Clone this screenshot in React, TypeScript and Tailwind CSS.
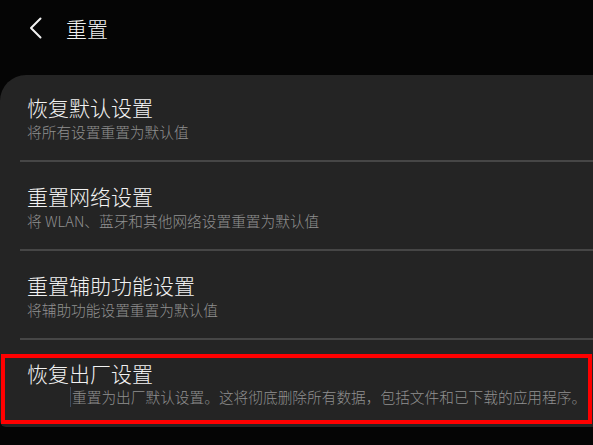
import React from 'react';

const font = { fontFamily: '"Noto Sans CJK SC", "Noto Sans", sans-serif' };

const rows = [
  { title: '恢复默认设置', desc: '将所有设置重置为默认值' },
  { title: '重置网络设置', desc: '将 WLAN、蓝牙和其他网络设置重置为默认值' },
  { title: '重置辅助功能设置', desc: '将辅助功能设置重置为默认值' },
];

function Row({ title, desc, first }: { title: string; desc: string; first?: boolean }) {
  return (
    <div>
      <div className={first ? 'pl-[27px] pt-[19px] pb-[18px]' : 'pl-[27px] pt-[21px] pb-[18px]'}>
        <div className="text-[21px] leading-[26px] font-light text-[#f2f2f2]">{title}</div>
        <div className="mt-[2px] text-[14.7px] leading-[20px] font-light text-[#909090] whitespace-nowrap">{desc}</div>
      </div>
      <div className="ml-[20px] h-[2px] bg-[#464646]" />
    </div>
  );
}

export default function App() {
  return (
    <div className="w-[593px] h-[445px] overflow-hidden bg-[#050505]" style={font}>
      <div className="flex h-[55px] items-center pl-[29px]">
        <svg width="14" height="22" viewBox="0 0 14 22" className="shrink-0">
          <polyline points="11.5,1.5 2,11 11.5,20.5" fill="none" stroke="#f2f2f2" strokeWidth="2" strokeLinecap="round" strokeLinejoin="round" />
        </svg>
        <span className="ml-[23px] text-[21px] leading-[26px] font-light text-[#f2f2f2]">重置</span>
      </div>
      <div className="mt-[20px] rounded-tl-[26px] rounded-bl-[6px] bg-[#242424] pb-[3px]">
        {rows.map((r, i) => (
          <Row key={r.title} title={r.title} desc={r.desc} first={i === 0} />
        ))}
        <div className="mt-[14px] ml-px mr-px border-4 border-[#ff0000] pl-[22px] pt-[2px] pb-[13px]">
          <div className="text-[21px] leading-[26px] font-light text-[#f2f2f2]">恢复出厂设置</div>
          <div className="mt-[1px] flex items-center pl-[43px]">
            <div className="h-[20px] w-px bg-[#3d4a5c]" />
            <div className="ml-px text-[14.7px] leading-[20px] font-light text-[#909090] whitespace-nowrap">
              重置为出厂默认设置。这将彻底删除所有数据，包括文件和已下载的应用程序。
            </div>
          </div>
        </div>
      </div>
    </div>
  );
}
